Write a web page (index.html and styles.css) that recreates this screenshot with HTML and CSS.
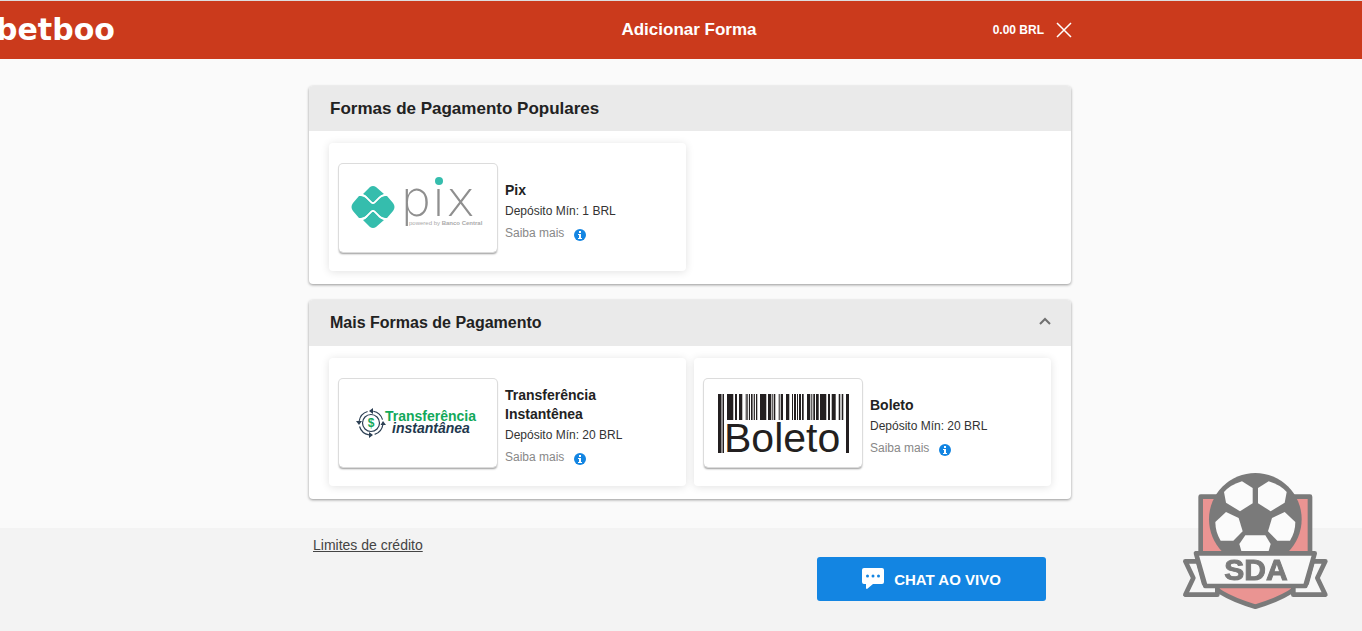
FILE: index.html
```html
<!DOCTYPE html>
<html lang="pt-BR">
<head>
<meta charset="utf-8">
<meta name="viewport" content="width=device-width, initial-scale=1">
<title>Adicionar Forma</title>
<link rel="stylesheet" href="styles.css">
</head>
<body>
<div class="page">
  <header class="topbar">
    <a class="brand" href="#">betboo</a>
    <div class="topbar-inner">
      <h1 class="topbar-title">Adicionar Forma</h1>
      <div class="account">
        <span>0.00 BRL</span>
        <button class="close" type="button" aria-label="Fechar">
          <svg width="16" height="16" viewBox="0 0 16 16"><path d="M1 1 15 15M15 1 1 15" fill="none" stroke="#fff" stroke-width="1.5"/></svg>
        </button>
      </div>
    </div>
  </header>

  <main class="content">
    <section class="panel">
      <h2 class="panel-title panel-title-main">Formas de Pagamento Populares</h2>
      <div class="methods">
        <article class="method">
          <div class="method-logo">
            <svg viewBox="0 0 158 88" role="img" aria-label="Pix">
              <g fill="#35bdad">
                <path d="M24 30 31 23Q34 21 37 23L45 30Q42 31 39 34L35 38Q34 39 33 38L29 34Q27 31 24 30Z"/>
                <path d="M24 56 31 63Q34 65 37 63L45 56Q42 55 39 52L35 48Q34 47 33 48L29 52Q27 55 24 56Z"/>
                <path d="M22 32Q25 32 28 35L32 39Q34 41 36 39L40 35Q43 32 46 32L48 32 54 39Q57 43 54 47L48 54 46 54Q43 54 40 51L36 47Q34 45 32 47L28 51Q25 54 22 54L20 54 14 47Q11 43 14 39L20 32Z"/>
              </g>
              <path d="M21 31Q26 31 29 35L32 38Q34 40 36 38L39 35Q42 31 47 31M21 55Q26 55 29 51L32 48Q34 46 36 48L39 51Q42 55 47 55" fill="none" stroke="#fff" stroke-width="1.6"/>
              <text class="pix-word" x="61" y="52">pix</text>
              <circle cx="100" cy="17" r="4" fill="#35bdad"/>
              <text class="pix-note" x="70" y="61">powered by <tspan class="pix-bank">Banco Central</tspan></text>
            </svg>
          </div>
          <div class="method-info">
            <h3>Pix</h3>
            <p>Depósito Mín: 1 BRL</p>
            <a class="more" href="#">Saiba mais
              <svg width="12" height="12" viewBox="0 0 12 12"><circle cx="6" cy="6" r="6" fill="#1385e2"/><path d="M5 2h2v2H5zM4 5h3v4h1v1H4V9h1V6H4z" fill="#fff"/></svg>
            </a>
          </div>
        </article>
      </div>
    </section>

    <section class="panel">
      <h2 class="panel-title">
        <button class="panel-toggle" type="button" aria-expanded="true">Mais Formas de Pagamento
          <svg width="12" height="12" viewBox="0 0 12 12"><path d="M1 7 6 2 11 7" fill="none" stroke="#707070" stroke-width="2"/></svg>
        </button>
      </h2>
      <div class="methods">
        <article class="method">
          <div class="method-logo">
            <svg viewBox="0 0 158 88" role="img" aria-label="Transferência instantânea">
              <g fill="none" stroke="#2d4054" stroke-width="1.2">
                <circle cx="32" cy="44" r="8.5"/>
                <circle cx="32" cy="44" r="12" stroke-dasharray="13 3 1.5 1.35" stroke-dashoffset="-2"/>
              </g>
              <path d="M30 32 34 29V35ZM44 42 41.500 46H47ZM34 56 30 53V59ZM20 46 17 42H23Z" fill="#2d4054"/>
              <text class="ti-dollar" x="32" y="48">$</text>
              <text class="ti-green" x="46" y="42">Transferência</text>
              <text class="ti-navy" x="53" y="54">instantânea</text>
            </svg>
          </div>
          <div class="method-info">
            <h3>Transferência Instantênea</h3>
            <p>Depósito Mín: 20 BRL</p>
            <a class="more" href="#">Saiba mais
              <svg width="12" height="12" viewBox="0 0 12 12"><circle cx="6" cy="6" r="6" fill="#1385e2"/><path d="M5 2h2v2H5zM4 5h3v4h1v1H4V9h1V6H4z" fill="#fff"/></svg>
            </a>
          </div>
        </article>
        <article class="method">
          <div class="method-logo">
            <svg viewBox="0 0 158 88" role="img" aria-label="Boleto">
              <path fill="#231f20" d="M14 15h3.500v59H14zM18.500 15h1.500v59h-1.500zM142 15h3v59h-3zM23 15h6.300v26H23zM31 15h2v26h-2zM35 15h3.300v26H35zM41.700 15h1v26h-1zM43.300 15h.8v26h-.8zM45 15h1v26h-1zM47 15h1.600v26H47zM49.700 15h1.200v26h-1.200zM52 15h1.300v26H52zM56 15h6.300v26H56zM64 15h3.300v26H64zM68.300 15h1v26h-1zM70 15h1.300v26H70zM74.700 15h1v26h-1zM76.700 15h2.300v26h-2.300zM82 15h3.300v26H82zM88 15h1v26h-1zM90 15h2v26h-2zM93 15h1v26h-1zM95 15h2v26h-2zM98 15h1.700v26H98zM103 15h3.300v26H103zM107.300 15h1v26h-1zM109.300 15h1.700v26h-1.700zM112 15h2.700v26H112zM116 15h6.300v26H116zM124 15h2v26h-2zM127.700 15h4v26h-4zM134.700 15h1.600v26h-1.600zM137.700 15h1.600v26h-1.600z"/>
              <text class="boleto-word" x="20" y="73">Boleto</text>
            </svg>
          </div>
          <div class="method-info">
            <h3>Boleto</h3>
            <p>Depósito Mín: 20 BRL</p>
            <a class="more" href="#">Saiba mais
              <svg width="12" height="12" viewBox="0 0 12 12"><circle cx="6" cy="6" r="6" fill="#1385e2"/><path d="M5 2h2v2H5zM4 5h3v4h1v1H4V9h1V6H4z" fill="#fff"/></svg>
            </a>
          </div>
        </article>
      </div>
    </section>
  </main>

  <footer class="footer">
    <div class="footer-inner">
      <a class="limits" href="#">Limites de crédito</a>
      <button class="chat" type="button">
        <svg width="22" height="22" viewBox="0 0 22 22"><path d="M2 0H20Q22 0 22 2V14Q22 16 20 16H11L5 21Q4 21 4 20V16H2Q0 16 0 14V2Q0 0 2 0Z" fill="#fff"/><g fill="#1385e2"><circle cx="5.500" cy="8" r="1.500"/><circle cx="11" cy="8" r="1.500"/><circle cx="16.500" cy="8" r="1.500"/></g></svg>
        CHAT AO VIVO
      </button>
    </div>
  </footer>
</div>

<svg class="badge" viewBox="0 0 510 480" role="img" aria-label="SDA">
  <path d="M92 110H420V340Q380 405 256 440Q132 405 92 340Z" fill="#ea9492" stroke="#7a7a7a" stroke-width="14" stroke-linejoin="round"/>
  <g fill="#f7f7f7" stroke="#7a7a7a" stroke-width="14" stroke-linejoin="round">
    <path d="M84 304H46L70 354 46 404H142V376L102 370Z"/>
    <path d="M428 304H466L442 354 466 404H370V376L410 370Z"/>
  </g>
  <circle cx="256" cy="178" r="139" fill="#7a7a7a"/>
  <g fill="#fbfbfb">
    <path d="M216 64 248 84V130L210 154 168 128 162 96Q182 74 216 64Z"/>
    <path d="M296 64 264 84V130L302 154 344 128 350 96Q330 74 296 64Z"/>
    <path d="M168 156 206 174 218 214 190 242H152Q136 216 136 186Z"/>
    <path d="M344 156 306 174 294 214 322 242H360Q376 216 376 186Z"/>
    <path d="M226 226H286L302 252 294 280H216L208 252Z"/>
  </g>
  <path d="M78 280H434L406 378H106Z" fill="#f8f8f8" stroke="#7a7a7a" stroke-width="14" stroke-linejoin="round"/>
  <text class="badge-word" x="258" y="361">SDA</text>
</svg>
</body>
</html>
```
FILE: styles.css
```css
* {
  box-sizing: border-box;
}

body {
  margin: 0;
  background: #fafafa;
  color: #222;
  font-family: "Liberation Sans", Arial, sans-serif;
}

h1, h2, h3, p {
  margin: 0;
}

button {
  border: 0;
  padding: 0;
  background: none;
  color: inherit;
  font: inherit;
  cursor: pointer;
}

.page {
  display: flex;
  flex-direction: column;
  min-height: 100vh;
}

.topbar {
  display: grid;
  grid-template-columns: 1fr minmax(0, 766px) 1fr;
  align-items: center;
  min-height: 59px;
  padding-left: 16px;
  border-top: 1px solid #ddd;
  background: #cb3a1c;
  color: #fff;
}

.brand {
  margin-left: -20px;
  color: #fff;
  font-family: "DejaVu Sans", sans-serif;
  font-size: 30px;
  font-weight: 700;
  line-height: 32px;
  text-decoration: none;
}

.topbar-inner {
  display: grid;
  grid-template-columns: 1fr auto 1fr;
  align-items: center;
}

.topbar-title {
  grid-column: 2;
  font-size: 17px;
}

.account {
  display: flex;
  align-items: center;
  justify-content: flex-end;
  gap: 12px;
  font-size: 12px;
  font-weight: 700;
}

.close {
  display: flex;
}

.content {
  display: flex;
  flex-direction: column;
  align-items: center;
  gap: 16px;
  padding: 27px 0 29px 18px;
}

.panel {
  width: 100%;
  max-width: 762px;
  border-radius: 4px;
  background: #fff;
  box-shadow: 0 1px 3px rgba(0, 0, 0, 0.4);
  overflow: hidden;
}

.panel-title {
  display: flex;
  align-items: center;
  min-height: 46px;
  padding: 0 20px 0 21px;
  background: #eaeaea;
  font-size: 16px;
}

.panel-title-main {
  min-height: 45px;
  font-size: 17px;
}

.panel-toggle {
  display: flex;
  flex: 1;
  align-items: center;
  justify-content: space-between;
}

.methods {
  display: grid;
  grid-template-columns: 1fr 1fr;
  gap: 8px;
  padding: 12px 20px 13px;
}

.method {
  display: flex;
  align-items: center;
  gap: 8px;
  min-height: 128px;
  padding: 17px 10px 15px;
  border-radius: 4px;
  background: #fff;
  box-shadow: 0 1px 8px rgba(0, 0, 0, 0.12);
}

.method-logo {
  flex: none;
  width: 158px;
  border-radius: 4px;
  box-shadow: 0 0 0 1px #dcdcdc, 0 2px 2px rgba(0, 0, 0, 0.4);
}

.method-logo svg {
  display: block;
  width: 100%;
}

.method-info {
  max-width: 130px;
  padding-top: 8px;
}

.method-info h3 {
  font-size: 14px;
  line-height: 19px;
}

.method-info p {
  color: #333;
  font-size: 12px;
  line-height: 22px;
  white-space: nowrap;
}

.more {
  display: flex;
  align-items: center;
  gap: 10px;
  color: #888;
  font-size: 12px;
  line-height: 22px;
  text-decoration: none;
}

.more svg {
  margin-top: 4px;
}

.pix-word {
  fill: #8f8f8f;
  font-family: "DejaVu Sans Light", "DejaVu Sans", sans-serif;
  font-size: 50px;
  font-weight: 200;
}

.pix-note {
  fill: #aaa;
  font-size: 6px;
}

.pix-bank {
  font-weight: 700;
}

.ti-dollar {
  fill: #12a85a;
  font-size: 12px;
  font-weight: 700;
  text-anchor: middle;
}

.ti-green {
  fill: #12a85a;
  font-size: 14px;
  font-weight: 700;
}

.ti-navy {
  fill: #22384e;
  font-size: 14px;
  font-style: italic;
  font-weight: 700;
}

.boleto-word {
  fill: #231f20;
  font-size: 41px;
}

.footer {
  display: flex;
  flex: 1;
  justify-content: center;
  padding: 8px 0 30px 18px;
  background: #f3f3f3;
}

.footer-inner {
  display: flex;
  align-items: flex-start;
  justify-content: space-between;
  width: 100%;
  max-width: 762px;
  padding: 0 25px 0 4px;
}

.limits {
  color: #444;
  font-size: 14px;
  line-height: 18px;
}

.chat {
  display: flex;
  align-items: center;
  justify-content: center;
  gap: 10px;
  min-width: 229px;
  min-height: 44px;
  margin-top: 21px;
  border-radius: 3px;
  background: #1385e2;
  color: #fff;
  font-size: 15px;
  font-weight: 700;
}

.badge {
  position: fixed;
  right: 22px;
  bottom: 11px;
  width: 170px;
}

.badge-word {
  fill: #7a7a7a;
  stroke: #7a7a7a;
  stroke-width: 3px;
  font-size: 90px;
  font-weight: 700;
  text-anchor: middle;
}
```
